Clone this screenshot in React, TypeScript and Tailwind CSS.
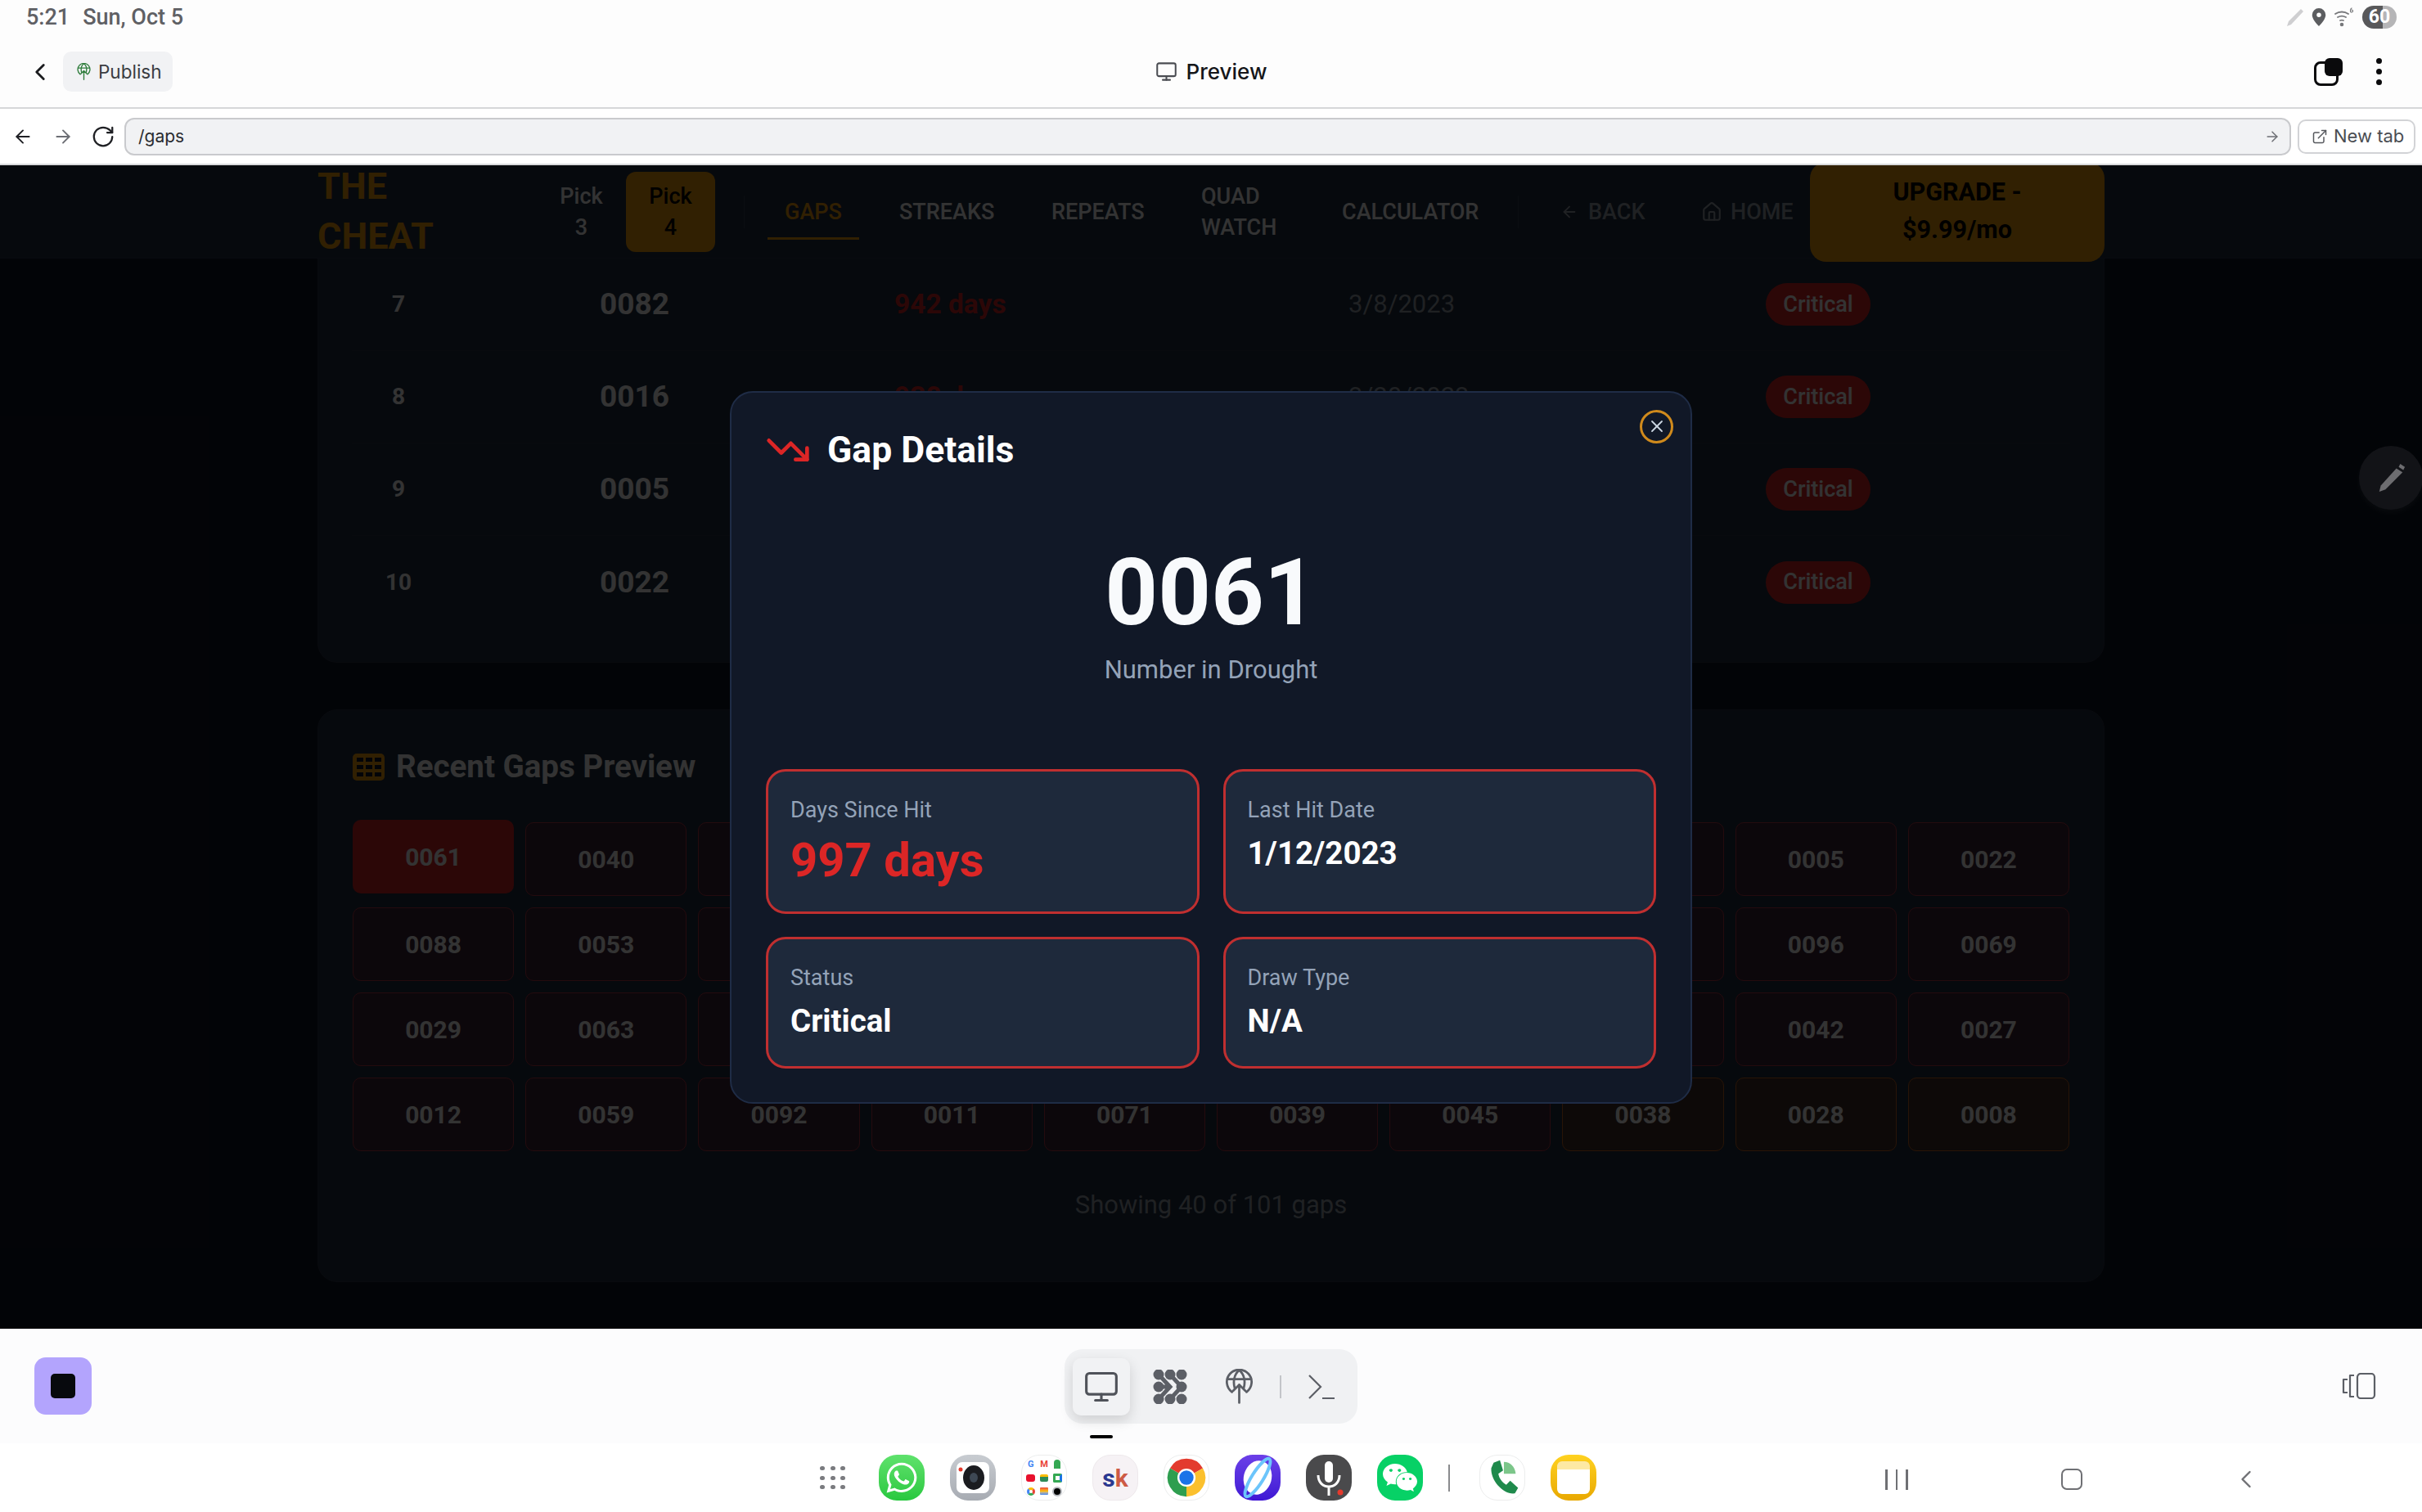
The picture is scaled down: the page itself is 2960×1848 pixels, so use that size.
import React from "react";
import {
  ChevronLeft, Monitor, ArrowLeft, ArrowRight, RotateCw, ExternalLink, Home, TrendingDown, X,
} from "lucide-react";
import { FaWhatsapp, FaWeixin } from "react-icons/fa";

const PublishIcon = ({ className }: { className: string }) => (
  <svg viewBox="0 0 24 31" fill="none" stroke="currentColor" strokeWidth="2" strokeLinecap="round" strokeLinejoin="round" className={className}>
    <path d="M5.5 20.5A11 11 0 1 1 18.5 20.5" />
    <path d="M12 1C7 5 6.5 12 8 17M12 1C17 5 17.5 12 16 17M1.5 9H22.5" />
    <path d="M12 30V14M6.5 19.5L12 14L17.5 19.5" />
  </svg>
);

const DotsIcon = () => (
  <svg viewBox="0 0 42 42" className="w-[42px] h-[42px] text-[#5c5f66]" fill="currentColor" stroke="currentColor">
    {[[7, 6], [21, 6], [35, 6], [7, 21], [35, 21], [7, 36], [21, 36], [35, 36]].map(([x, y]) => (
      <circle key={`${x}-${y}`} cx={x} cy={y} r="6.5" stroke="none" />
    ))}
    <path d="M21 6L35 21L21 36M7 6L21 21L7 36M7 21H21" fill="none" strokeWidth="5" />
  </svg>
);

const Tile = ({ className, children }: { className: string; children?: React.ReactNode }) => (
  <div className={`w-[56px] h-[56px] rounded-[22px] flex items-center justify-center shrink-0 overflow-hidden ${className}`}>{children}</div>
);

const ChromeIcon = () => (
  <svg viewBox="0 0 56 56" className="w-[56px] h-[56px]">
    <path d="M28 28L7.2 16A24 24 0 0 1 48.8 16Z" fill="#e33b2e" />
    <path d="M28 28L48.8 16A24 24 0 0 1 28 52Z" fill="#fbc02d" />
    <path d="M28 28L28 52A24 24 0 0 1 7.2 16Z" fill="#2e9e4f" />
    <circle cx="28" cy="28" r="11.5" fill="#fff" />
    <circle cx="28" cy="28" r="9" fill="#1a73e8" />
  </svg>
);

const GoogleFolder = () => (
  <Tile className="bg-white border border-[#eceded]">
    <div className="grid grid-cols-3 gap-x-[5px] gap-y-[5px] w-[44px] justify-items-center items-center font-[Roboto,sans-serif] text-[11px] leading-[12px] font-bold">
      <span className="text-[#4285f4]">G</span>
      <span className="text-[#ea4335]">M</span>
      <span className="w-[8px] h-[11px] rounded-t-full rounded-b-[3px] bg-[#34a853]" />
      <span className="w-[11px] h-[9px] rounded-[3px] bg-[#e8112d]" />
      <span className="w-[10px] h-[9px] bg-[#2d8b57] rounded-[2px] border-t-[3px] border-[#fbbc04]" />
      <span className="w-[11px] h-[11px] rounded-[2px] border-[3px] border-[#34a853] border-r-[#1a73e8]" />
      <span className="w-[10px] h-[10px] rounded-full border-[3px] border-[#fbbc04] border-l-[#4285f4] border-b-[#34a853] border-r-[#ea4335]" />
      <span className="w-[10px] h-[9px] rounded-[1px] bg-linear-to-b from-[#ea4335] via-[#fbbc04] to-[#4285f4]" />
      <span className="w-[12px] h-[12px] rounded-full bg-black border-[2px] border-[#b5b8bd]" />
    </div>
  </Tile>
);

const rows = [
  { rank: 7, n: "0082", days: "942 days", date: "3/8/2023" },
  { rank: 8, n: "0016", days: "930 days", date: "3/20/2023" },
  { rank: 9, n: "0005", days: "928 days", date: "3/22/2023" },
  { rank: 10, n: "0022", days: "925 days", date: "3/25/2023" },
];

const cells = [
  "0061", "0040", "0075", "0033", "0047", "0018", "0082", "0016", "0005", "0022",
  "0088", "0053", "0014", "0077", "0031", "0090", "0024", "0066", "0096", "0069",
  "0029", "0063", "0050", "0084", "0037", "0019", "0072", "0056", "0042", "0027",
  "0012", "0059", "0092", "0011", "0071", "0039", "0045", "0038", "0028", "0008",
];

const Stat = ({ label, value, red }: { label: string; value: string; red?: boolean }) => (
  <div className="bg-[#1e293b] border-[3px] border-[#c02f30] rounded-[24px] px-[27px] pt-[29px] pb-[27px]">
    <div className="text-[27px] leading-[36px] text-[#94a3b8]">{label}</div>
    {red ? (
      <div className="mt-[7px] text-[58px] leading-[72px] font-bold text-[#dc2626]">{value}</div>
    ) : (
      <div className="mt-[7px] text-[38.5px] leading-[56px] font-bold text-white">{value}</div>
    )}
  </div>
);

export default function App() {
  return (
    <div className="w-[2960px] h-[1848px] flex flex-col overflow-hidden bg-white font-[Roboto,sans-serif]">
      {/* status bar */}
      <div className="h-[50px] bg-[#fdfdfd] flex items-center justify-between pl-[32px] pr-[31px] shrink-0">
        <div className="text-[27px] leading-[42px] font-medium text-[#5f6064] flex gap-[16px] -mt-[8px]">
          <span>5:21</span><span>Sun, Oct 5</span>
        </div>
        <div className="flex items-center -mt-[8px]">
          <svg viewBox="0 0 22 22" className="w-[22px] h-[22px] text-[#cfcfd1]" fill="currentColor"><path d="M18 1L21 4L6 20L1 22L3 16Z" /></svg>
          <svg viewBox="0 0 18 24" className="w-[18px] h-[22px] ml-[9px] text-[#5c5d60]" fill="currentColor"><path fillRule="evenodd" d="M9 0a9 9 0 0 1 9 9c0 5-5 11-9 15C5 20 0 14 0 9a9 9 0 0 1 9-9Zm0 6a3 3 0 1 0 0 6 3 3 0 0 0 0-6Z" /></svg>
          <svg viewBox="0 0 24 24" className="w-[24px] h-[24px] ml-[10px] text-[#77787b]" fill="none" stroke="currentColor" strokeWidth="1.8" strokeLinecap="round"><path d="M1 8a14 14 0 0 1 16 0M4 12a10 10 0 0 1 10 0M7 16a5 5 0 0 1 4 0" /><circle cx="9" cy="21" r="1.4" fill="currentColor" /><path d="M21 1c-2 1-2 5 0 5s2-3 0-3" strokeWidth="1.2" /></svg>
          <div className="ml-[10px] w-[42px] h-[28px] rounded-full overflow-hidden flex relative text-[23px] leading-[28px] font-bold text-white">
            <div className="w-[25px] bg-[#58585a]" />
            <div className="flex-1 bg-[#b5b5b7]" />
            <span className="absolute inset-0 text-center">60</span>
          </div>
        </div>
      </div>

      {/* app header */}
      <div className="h-[83px] pb-[6px] bg-[#fdfdfd] border-b-2 border-[#d6d7d9] grid grid-cols-[1fr_auto_1fr] items-center shrink-0 font-[Inter,sans-serif]">
        <div className="flex items-center pl-[32px]">
          <ChevronLeft className="w-[34px] h-[34px] text-[#1b1c1f]" strokeWidth={2} />
          <div className="ml-[11px] w-[134px] h-[49px] bg-[#f1f2f4] rounded-[10px] flex items-center pl-[17px] gap-[9px]">
            <PublishIcon className="w-[17px] h-[21px] text-[#2f7d3c]" />
            <span className="text-[22.5px] text-[#3a3d42]">Publish</span>
          </div>
        </div>
        <div className="flex items-center gap-[11px]">
          <Monitor className="w-[27px] h-[27px] text-[#4a4c52]" strokeWidth={1.8} />
          <span className="text-[26px] font-medium text-[#15161a]">Preview</span>
        </div>
        <div className="flex items-center justify-end pr-[49px]">
          <div className="relative w-[35px] h-[34px]">
            <div className="absolute left-0 bottom-0 w-[30px] h-[30px] rounded-[8px] border-[3px] border-[#0a0a0c]" />
            <div className="absolute right-0 top-0 w-[22px] h-[22px] rounded-[6px] bg-[#0a0a0c]" />
          </div>
          <div className="ml-[41px] flex flex-col gap-[6px]">
            <span className="w-[7px] h-[7px] rounded-full bg-[#0a0a0c]" />
            <span className="w-[7px] h-[7px] rounded-full bg-[#0a0a0c]" />
            <span className="w-[7px] h-[7px] rounded-full bg-[#0a0a0c]" />
          </div>
        </div>
      </div>

      {/* url row */}
      <div className="h-[69px] bg-white border-b-2 border-[#d8d9db] flex items-center pl-[15px] pr-[8px] shrink-0 font-[Inter,sans-serif]">
        <ArrowLeft className="w-[26px] h-[26px] text-[#1f2024]" strokeWidth={1.8} />
        <ArrowRight className="w-[26px] h-[26px] ml-[23px] text-[#6c6e74]" strokeWidth={1.8} />
        <RotateCw className="w-[30px] h-[30px] ml-[21px] text-[#1f2024]" strokeWidth={1.8} />
        <div className="ml-[11px] h-[46px] flex-1 bg-[#f1f2f4] border-2 border-[#c9cacd] rounded-[12px] flex items-center justify-between pl-[15px] pr-[11px]">
          <span className="text-[21px] text-[#2a2c30] mt-[1px]">/gaps</span>
          <ArrowRight className="w-[20px] h-[20px] text-[#6c6e74]" strokeWidth={1.8} />
        </div>
        <div className="ml-[8px] w-[144px] h-[42px] bg-white border-2 border-[#d2d3d6] rounded-[10px] flex items-center pl-[15px] gap-[7px]">
          <ExternalLink className="w-[20px] h-[20px] text-[#55575c]" strokeWidth={1.8} />
          <span className="text-[22px] text-[#4a4d52] whitespace-nowrap">New tab</span>
        </div>
      </div>

      {/* page */}
      <div className="relative flex-1 overflow-hidden bg-[#0d1423]">
        <header className="h-[114px] bg-[#1f2d40] border-b border-[#2a364a] flex">
          <div className="w-[2184px] mx-auto flex items-center text-[27px] leading-[38px] font-medium text-white">
            <div className="w-[268px] shrink-0 text-[45px] leading-[61px] font-bold text-[#f59e0b] -mt-[2px]">THE<br />CHEAT</div>
            <div className="w-[109px] shrink-0 text-center">Pick<br />3</div>
            <div className="w-[109px] shrink-0 h-[98px] rounded-[12px] bg-[#f59e0b] text-black flex items-center justify-center text-center">Pick<br />4</div>
            <div className="ml-[35px] shrink-0 w-px h-[40px] bg-[#334055]" />
            <div className="ml-[28px] shrink-0 w-[112px] h-[68px] pt-[3px] flex items-center justify-center text-[#f59e0b] border-b-[3px] border-[#f59e0b]">GAPS</div>
            <div className="ml-[49px] shrink-0 w-[186px]">STREAKS</div>
            <div className="w-[183px] shrink-0">REPEATS</div>
            <div className="w-[172px] shrink-0">QUAD<br />WATCH</div>
            <div className="w-[215px] shrink-0">CALCULATOR</div>
            <div className="w-px shrink-0 h-[40px] bg-[#334055]" />
            <div className="ml-[51px] shrink-0 w-[172px] flex items-center text-[#9ca3af]">
              <ArrowLeft className="w-[22px] h-[22px]" strokeWidth={2} />
              <span className="ml-[12px]">BACK</span>
            </div>
            <div className="w-[133px] shrink-0 flex items-center text-[#9ca3af]">
              <Home className="w-[26px] h-[26px]" strokeWidth={2} />
              <span className="ml-[10px]">HOME</span>
            </div>
            <div className="w-[360px] shrink-0 h-[122px] pb-[2px] rounded-[20px] bg-[#f59e0b] text-black text-[30.5px] leading-[46px] font-bold flex items-center justify-center text-center">UPGRADE -<br />$9.99/mo</div>
          </div>
        </header>

        <main className="w-[2184px] mx-auto">
          <section className="bg-[#1f2d40] border border-[#2b3448] border-t-0 rounded-b-[24px] px-[41px] pb-[41px]">
            {rows.map((r, i) => (
              <div key={r.rank} className={`h-[113px] grid grid-cols-[303px_360px_555px_510px_1fr] items-center ${i < 3 ? "border-b border-[#2b3448]" : ""}`}>
                <div className="w-[114px] text-center text-[28px] font-bold text-white">{r.rank}</div>
                <div className="text-[37px] font-bold text-white">{r.n}</div>
                <div className="text-[33.5px] font-bold text-[#dc2626]">{r.days}</div>
                <div className="text-[31px] text-[#9ca3af]">{r.date}</div>
                <div>
                  <span className="inline-flex h-[52px] w-[128px] items-center justify-center rounded-full bg-[#dc2626] text-[27px] font-medium text-white">Critical</span>
                </div>
              </div>
            ))}
          </section>

          <section className="mt-[57px] h-[700px] bg-[#1f2d40] border border-[#2b3448] rounded-[24px] px-[42px] pt-[45px]">
            <div className="flex items-center h-[48px]">
              <svg viewBox="0 0 39 33" className="w-[39px] h-[33px]">
                <rect width="39" height="33" rx="5" fill="#f59e0b" />
                {[5, 14, 23].map((y) => [5, 16, 27].map((x) => <rect key={`${x}-${y}`} x={x} y={y} width="8" height="5" fill="#0f1428" />))}
              </svg>
              <h2 className="ml-[14px] text-[38.5px] leading-[48px] font-bold text-white">Recent Gaps Preview</h2>
            </div>
            <div className="mt-[44px] grid grid-cols-10 gap-[14px]">
              {cells.map((c, i) => (
                <div
                  key={c + i}
                  className={`h-[90px] rounded-[10px] flex items-center justify-center text-[30px] font-bold text-white ${
                    i === 0
                      ? "bg-[#dc2626] -translate-y-[3px]"
                      : i >= 37
                      ? "bg-[#41302c] border border-[#c86423]"
                      : "bg-[#3c2337] border border-[#b43746]"
                  }`}
                >
                  {c}
                </div>
              ))}
            </div>
            <div className="mt-[45px] text-center text-[31px] leading-[42px] text-[#9ca3af]">Showing 40 of 101 gaps</div>
          </section>
        </main>

        {/* modal */}
        <div className="absolute inset-0 bg-black/80 flex items-center justify-center">
          <div className="relative w-[1176px] h-[871px] rounded-[28px] bg-[#111827] border-2 border-[#1f2c46] pt-[41px] px-[42px]">
            <button className="absolute right-[21px] top-[21px] w-[41px] h-[41px] rounded-full border-[3px] border-[#d08a1c] flex items-center justify-center text-[#cbd5e1]">
              <X className="w-[24px] h-[24px]" strokeWidth={1.8} />
            </button>
            <div className="flex items-center h-[58px]">
              <TrendingDown className="w-[56px] h-[56px] text-[#dc2626] -ml-[1px]" strokeWidth={2} />
              <h3 className="ml-[20px] text-[44.5px] font-bold leading-[58px] text-white">Gap Details</h3>
            </div>
            <div className="mt-[76px] text-center text-[113px] leading-[140px] font-bold text-[#f8fafc]">0061</div>
            <div className="text-center text-[31px] leading-[48px] text-[#94a3b8]">Number in Drought</div>
            <div className="mt-[97px] grid grid-cols-2 gap-x-[29px] gap-y-[28px]">
              <Stat label="Days Since Hit" value="997 days" red />
              <Stat label="Last Hit Date" value="1/12/2023" />
              <Stat label="Status" value="Critical" />
              <Stat label="Draw Type" value="N/A" />
            </div>
          </div>
        </div>

        {/* floating edit button */}
        <div className="absolute left-[2883px] top-[343px] w-[78px] h-[78px] rounded-full bg-[#121317] shadow-[0_4px_8px_rgba(255,255,255,0.03)] flex items-center justify-center">
          <svg viewBox="0 0 40 40" className="w-[38px] h-[38px] text-[#6d6d70]" fill="currentColor">
            <path d="M27 8L35 13L13 35L5 38L7 30Z" />
            <path d="M32 2L38 6L36 10L30 6Z" />
          </svg>
        </div>
      </div>

      {/* tool bar */}
      <div className="h-[140px] bg-[#fcfcfd] shrink-0 relative flex items-center justify-between pl-[42px] pr-[56px]">
        <div className="w-[70px] h-[70px] rounded-[14px] bg-[#b3a4fd] flex items-center justify-center">
          <div className="w-[30px] h-[30px] rounded-[5px] bg-[#07090d]" />
        </div>
        <div className="absolute left-[1301px] top-[25px] w-[358px] h-[91px] rounded-[22px] bg-[#f0f1f3] flex items-center pl-[10px]">
          <div className="w-[70px] h-[70px] rounded-[10px] bg-[#f1f2f4] shadow-[0_6px_16px_rgba(0,0,0,0.14)] flex items-center justify-center">
            <Monitor className="w-[44px] h-[44px] text-[#4f5259]" strokeWidth={1.7} />
          </div>
          <div className="ml-[28px]"><DotsIcon /></div>
          <PublishIcon className="ml-[47px] w-[33px] h-[43px] text-[#5c5f66]" />
          <div className="ml-[33px] w-[2px] h-[28px] bg-[#c3c5c9]" />
          <svg viewBox="0 0 32 30" className="ml-[33px] w-[32px] h-[30px] text-[#5c5f66]" fill="none" stroke="currentColor" strokeWidth="2.2"><path d="M1 1L15 15L1 29M17 29H32" /></svg>
        </div>
        <div className="absolute left-[1332px] top-[130px] w-[28px] h-[4px] rounded-full bg-black" />
        <svg viewBox="0 0 42 32" className="w-[42px] h-[32px] text-[#5c5f66]" fill="none" stroke="currentColor" strokeWidth="2.2" strokeLinejoin="round">
          <path d="M7 8H2V24H7" />
          <path d="M15 3H10V29H15" />
          <rect x="19" y="1" width="21" height="30" rx="4" />
        </svg>
      </div>

      {/* dock */}
      <div className="h-[84px] bg-white shrink-0 flex items-center pl-[1002px] relative">
        <div className="grid grid-cols-3 gap-x-[8px] gap-y-[6.5px] w-[30px]">
          {Array.from({ length: 9 }).map((_, i) => <span key={i} className="w-[6px] h-[5px] rounded-full bg-[#7a7b7f]" />)}
        </div>
        <div className="ml-[42px] flex items-center gap-[31px]">
          <Tile className="bg-linear-to-b from-[#5ee26c] to-[#27c83f] text-white"><FaWhatsapp className="w-[42px] h-[42px]" /></Tile>
          <Tile className="bg-linear-to-b from-[#c8ccd1] to-[#a7abb2]">
            <svg viewBox="0 0 40 38" className="w-[40px] h-[38px]">
              <rect width="40" height="38" rx="7" fill="#fff" />
              <circle cx="5" cy="9" r="2.5" fill="#e5392c" />
              <ellipse cx="21" cy="19" rx="13" ry="15" fill="#1b1c20" />
              <ellipse cx="21" cy="19" rx="5" ry="6" fill="#3e4854" />
            </svg>
          </Tile>
          <GoogleFolder />
          <Tile className="bg-[#f6f2f5] border border-[#eee9ec] text-[30px] font-bold font-[Roboto,sans-serif]">
            <span className="text-[#2b3990]">s</span><span className="text-[#cd5b45]">k</span>
          </Tile>
          <Tile className="bg-white border border-[#eceded]"><ChromeIcon /></Tile>
          <Tile className="bg-linear-to-b from-[#6c3fe8] to-[#3f15d4]">
            <svg viewBox="0 0 56 56" className="w-[56px] h-[56px]">
              <ellipse cx="28" cy="28" rx="17" ry="21" fill="#fff" transform="rotate(15 28 28)" />
              <ellipse cx="28" cy="28" rx="7" ry="27" fill="none" stroke="#6cc5fb" strokeWidth="4" transform="rotate(32 28 28)" />
            </svg>
          </Tile>
          <Tile className="bg-[#4a4a4c] relative">
            <svg viewBox="0 0 56 56" className="w-[56px] h-[56px]" fill="none" stroke="#fff" strokeWidth="3">
              <rect x="23" y="8" width="10" height="26" rx="5" fill="#fff" stroke="none" />
              <path d="M15 25C15 34 21 39 28 39C35 39 41 34 41 25M28 39V50" />
              <circle cx="42" cy="46" r="3.5" fill="#e5392c" stroke="none" />
            </svg>
          </Tile>
          <Tile className="bg-[#07d166] text-white"><FaWeixin className="w-[44px] h-[44px]" /></Tile>
          <div className="w-[2px] h-[33px] bg-[#8a8b8e]" />
          <Tile className="bg-white border border-[#eceded] ml-[5px]">
            <svg viewBox="0 0 56 56" className="w-[56px] h-[56px]">
              <path d="M17 9L25 6L29 19L23 23C24 29 28 34 33 37L38 32L48 41L44 48C30 50 13 32 14 16Z" fill="#1f8a4c" />
              <path d="M30 8C38 8 44 14 45 23L30 23Z" fill="#7cc68a" />
            </svg>
          </Tile>
          <Tile className="bg-linear-to-b from-[#ffd21f] to-[#e8a800]">
            <div className="w-[40px] h-[40px] rounded-[6px] bg-white border-t-[10px] border-[#fde9a4]" />
          </Tile>
        </div>
        <div className="absolute left-[2304px] top-[32px] flex gap-[10px]">
          <span className="w-[2.5px] h-[25px] bg-[#6f7074]" />
          <span className="w-[2.5px] h-[25px] bg-[#6f7074]" />
          <span className="w-[2.5px] h-[25px] bg-[#6f7074]" />
        </div>
        <div className="absolute left-[2519px] top-[31px] w-[26px] h-[26px] rounded-[7px] border-[2.5px] border-[#6f7074]" />
        <ChevronLeft className="absolute left-[2727px] top-[26px] w-[36px] h-[36px] text-[#6f7074]" strokeWidth={1.6} />
      </div>
    </div>
  );
}
